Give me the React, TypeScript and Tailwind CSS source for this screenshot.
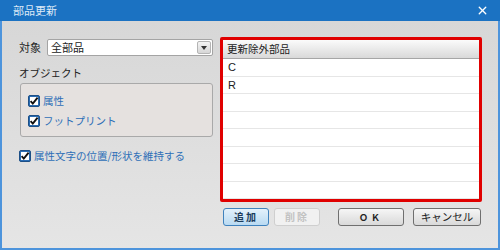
import { X } from "lucide-react";

const font = { fontFamily: '"Noto Sans CJK JP", "Noto Sans", sans-serif' };

// Checked checkbox drawn like the Windows style box
const CheckBox = () => (
  <svg width="12" height="12" viewBox="0 0 12 12" className="shrink-0">
    <rect x="0.5" y="0.5" width="11" height="11" rx="1.5" fill="#2a6cb3" stroke="#1d4f86" />
    <rect x="2" y="2" width="8" height="8" fill="#ffffff" />
    <path d="M2.6 6.2 L4.8 8.6 L9.6 2.6" fill="none" stroke="#111" strokeWidth="1.9" />
  </svg>
);

const rows = ["C", "R", "", "", "", "", "", ""];

export default function App() {
  return (
    <div className="w-[500px] h-[250px] flex flex-col text-[10.5px] text-[#222]" style={font}>
      {/* title bar */}
      <div className="h-[21px] bg-[#1b72c2] flex items-center justify-between pl-[13px] pr-[11px] shrink-0">
        <span className="text-[11px] text-[#dce9f7]">部品更新</span>
        <X size={13} strokeWidth={2.5} className="text-white" />
      </div>

      {/* body */}
      <div className="flex-1 border-x-2 border-b-2 border-[#4d94dc] bg-gradient-to-b from-[#d7d7d7] to-[#e5e5e5] pl-[17px] pr-[16px] pt-[16px] flex gap-[7px]">
        {/* left column */}
        <div className="w-[194px] pt-[2px] flex flex-col">
          <div className="flex items-center h-[17px]">
            <span className="w-[28px] text-[11px]">対象</span>
            <div className="flex-1 h-[17px] flex bg-white border border-[#a4a4a4] rounded-[2px]">
              <span className="flex-1 pl-[3px] leading-[15px] text-[11px]">全部品</span>
              <div className="w-[14px] m-px border border-[#b4b4b4] rounded-[2px] bg-gradient-to-b from-[#f4f4f4] to-[#d6d6d6] flex items-center justify-center">
                <svg width="6" height="4" viewBox="0 0 6 4"><path d="M0 0 H6 L3 4 Z" fill="#333" /></svg>
              </div>
            </div>
          </div>
          <div className="mt-[10px] leading-[14px]">オブジェクト</div>
          <div className="mt-[3px] ml-px h-[54px] border border-[#a9a9a9] rounded-[3px] bg-[#e5e1df] pl-[7px] pt-[11px] flex flex-col gap-[8px]">
            <div className="flex items-center gap-[3px] text-[#2e6fb7] leading-[12px]">
              <CheckBox />
              <span>属性</span>
            </div>
            <div className="flex items-center gap-[3px] text-[#2e6fb7] leading-[12px]">
              <CheckBox />
              <span>フットプリント</span>
            </div>
          </div>
          <div className="mt-[13px] flex items-center gap-[3px] text-[#2e6fb7] leading-[12px]">
            <CheckBox />
            <span>属性文字の位置/形状を維持する</span>
          </div>
        </div>

        {/* right column */}
        <div className="flex-1 flex flex-col">
          <div className="h-[165px] border-[3px] border-[#e00000] rounded-[2px] bg-white flex flex-col">
            <div className="h-[19px] shrink-0 bg-gradient-to-b from-[#fbfbfb] to-[#d9d9d9] border-b border-[#a6a6a6] pl-[4px] leading-[18px]">
              更新除外部品
            </div>
            {rows.map((r, i) => (
              <div key={i} className="h-[17.6px] border-b border-[#e6e6e6] pl-[5px] leading-[17px] text-[11px]" style={{ fontFamily: '"Liberation Sans", sans-serif' }}>
                {r}
              </div>
            ))}
          </div>
          <div className="mt-[6px] flex items-center">
            <button className="ml-[3px] w-[46px] h-[18px] rounded-[3px] border border-[#3f82bd] bg-gradient-to-b from-[#e3f1fb] to-[#b9daf2] text-[10px] font-bold tracking-[2px] text-[#1c3c5c] leading-none">
              追加
            </button>
            <button className="ml-[5px] w-[46px] h-[18px] rounded-[3px] border border-[#cfcfcf] bg-[#f1f1f1] text-[10px] font-bold tracking-[2px] text-[#c2c2c2] leading-none">
              削除
            </button>
            <button className="ml-[18px] w-[66px] h-[18px] rounded-[3px] border border-[#6f6f6f] bg-gradient-to-b from-[#f6f6f6] to-[#d9d9d9] text-[9px] font-bold tracking-[3px] text-[#222] leading-none">
              ＯＫ
            </button>
            <button className="ml-[9px] w-[68px] h-[18px] rounded-[3px] border border-[#6f6f6f] bg-gradient-to-b from-[#f6f6f6] to-[#d9d9d9] text-[10.5px] text-[#222] leading-none">
              キャンセル
            </button>
          </div>
        </div>
      </div>
    </div>
  );
}
